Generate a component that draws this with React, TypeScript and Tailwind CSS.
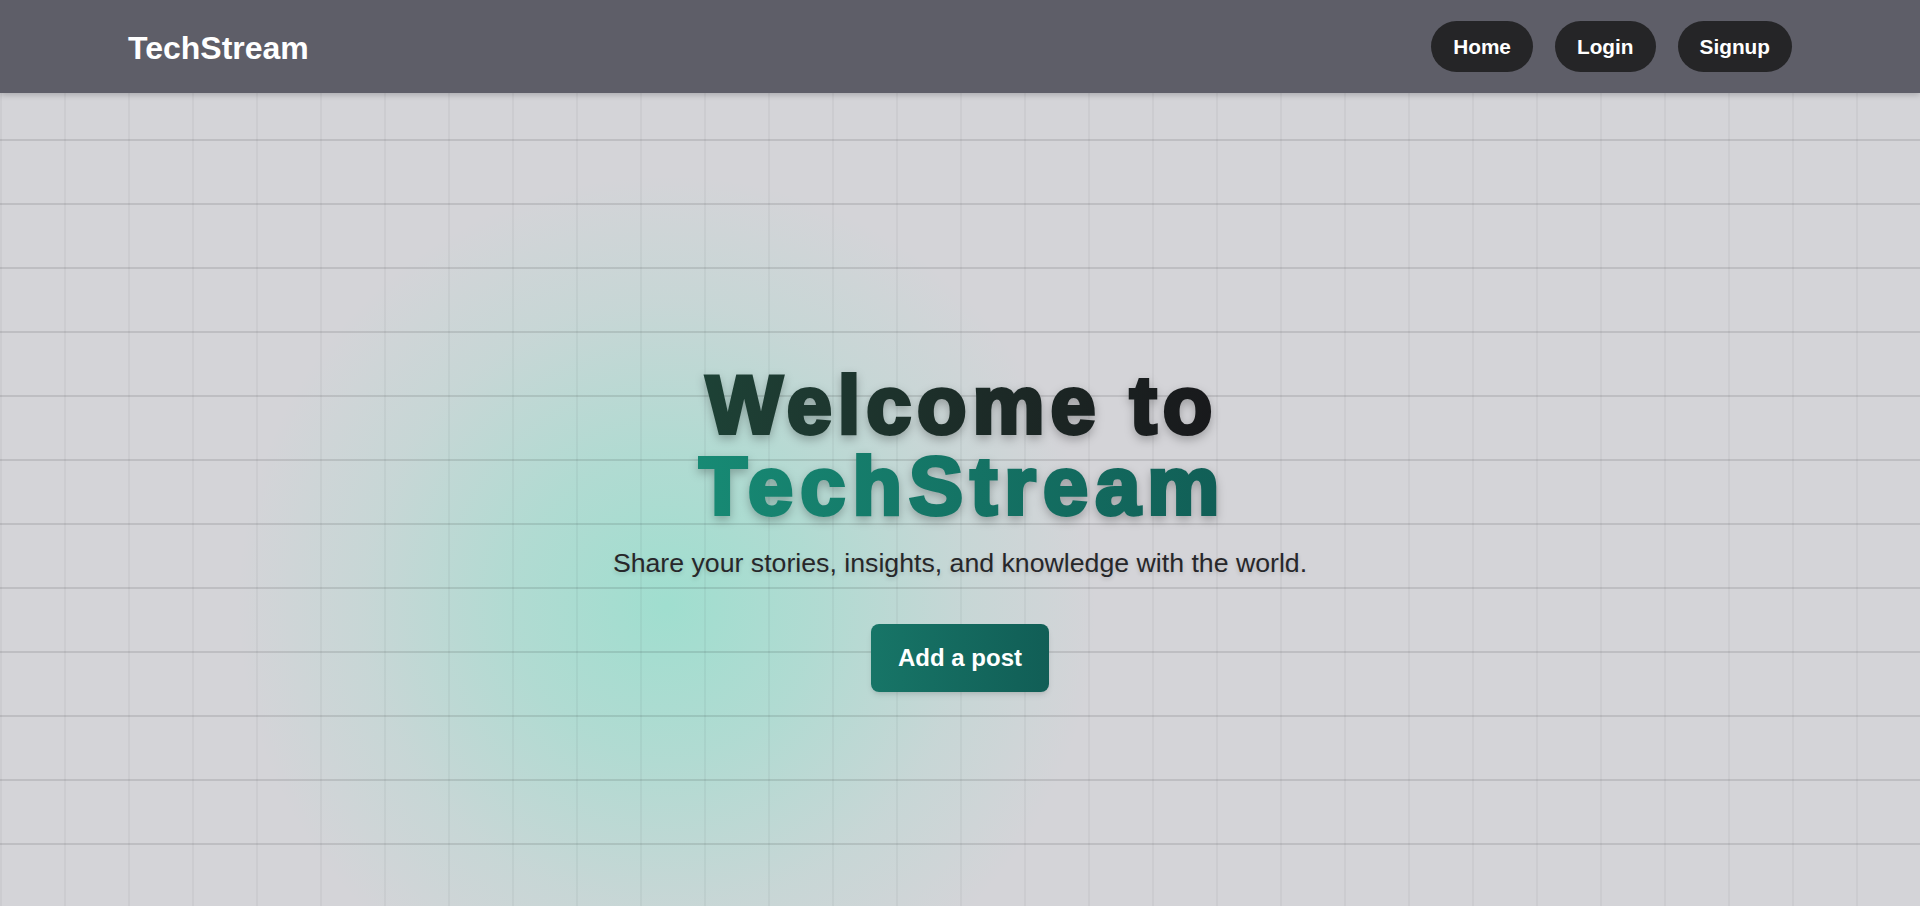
export default function App() {
  return (
    <div className="min-h-screen bg-[#d4d4d8] font-['Liberation_Sans',Arial,sans-serif] bg-[linear-gradient(to_bottom,rgba(0,0,0,0.1)_2px,transparent_2px),linear-gradient(to_right,rgba(0,0,0,0.04)_2px,transparent_2px),radial-gradient(circle_430px_at_667px_605px,rgba(108,232,198,0.5),rgba(108,232,198,0.34)_35%,rgba(108,232,198,0.12)_70%,transparent)] [background-size:64px_64px,64px_64px,100%_100%] [background-position:0_11px,0_0,0_0] [background-repeat:repeat,repeat,no-repeat]">
      <header className="flex h-[93px] items-center justify-between bg-[#5e5e68] px-32 shadow-[0_2px_6px_rgba(0,0,0,0.2)]">
        <div className="pt-0.5 text-[32px] font-bold text-white">TechStream</div>
        <nav className="flex items-center gap-[22px]">
          <a href="#" className="flex h-[51px] items-center rounded-full bg-[#252527] px-[22px] text-[20.8px] font-bold text-white">
            Home
          </a>
          <a href="#" className="flex h-[51px] items-center rounded-full bg-[#252527] px-[22px] text-[20.8px] font-bold text-white">
            Login
          </a>
          <a href="#" className="flex h-[51px] items-center rounded-full bg-[#252527] px-[22px] text-[20.8px] font-bold text-white">
            Signup
          </a>
        </nav>
      </header>

      <main className="flex flex-col items-center pt-[272px] text-center">
        <h1 className="pl-[4px] text-[81px] font-bold leading-[81px] drop-shadow-[0_4px_5px_rgba(0,0,0,0.25)]">
          <span className="block bg-linear-to-r from-[#1d4236] to-[#18181b] bg-clip-text tracking-[0.073em] text-transparent [-webkit-text-stroke:4px_transparent]">
            Welcome to
          </span>
          <span className="block bg-linear-to-r from-[#178a74] to-[#115e56] bg-clip-text tracking-[0.088em] text-transparent [-webkit-text-stroke:4px_transparent]">
            TechStream
          </span>
        </h1>
        <p className="mt-4 text-[26.7px] leading-[1.5] text-[#27272a] [text-shadow:0_2px_4px_rgba(0,0,0,0.15)]">
          Share your stories, insights, and knowledge with the world.
        </p>
        <button className="mt-[41px] rounded-lg bg-linear-to-r from-[#177567] to-[#115e56] px-[27px] py-4 text-[24px] font-bold leading-9 text-white shadow-md">
          Add a post
        </button>
      </main>
    </div>
  );
}
